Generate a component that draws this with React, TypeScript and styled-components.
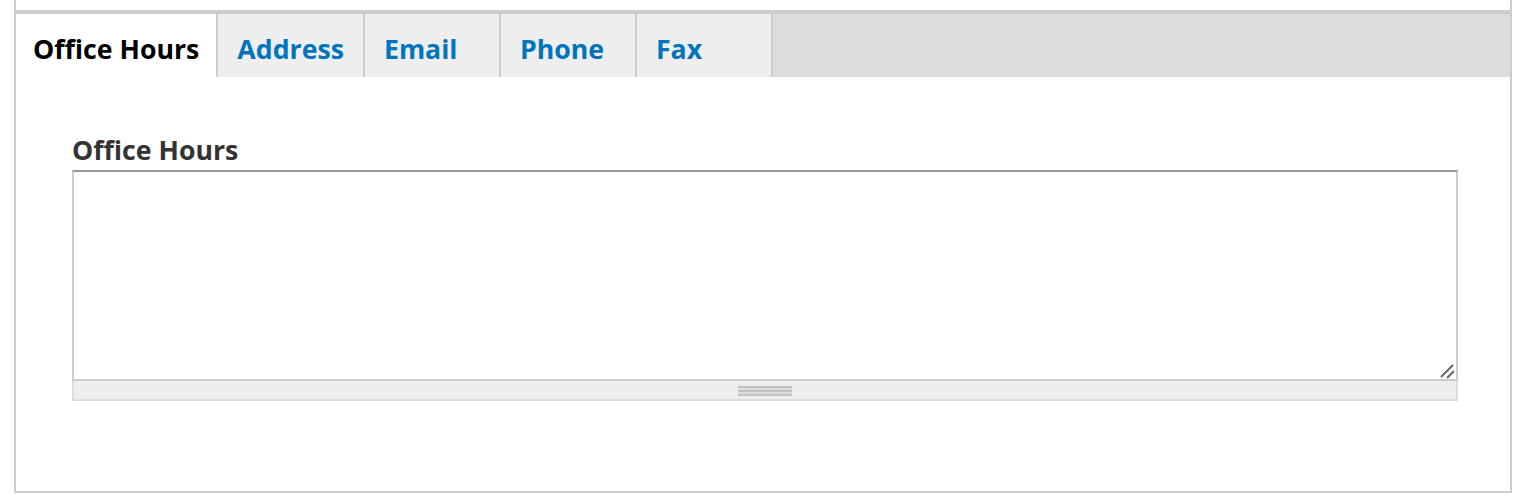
import styled, { createGlobalStyle } from "styled-components";

const GlobalStyle = createGlobalStyle`
  html, body {
    margin: 0;
    background: #fff;
  }
  body {
    font-family: "Open Sans", "Noto Sans", sans-serif;
  }
`;

const Page = styled.div`
  padding: 0 14px;
`;

const Frame = styled.div`
  border: 2px solid #ccc;
  border-top: none;
  padding-top: 10px;
`;

const TabList = styled.ul`
  display: flex;
  margin: 0;
  padding: 0;
  list-style: none;
  background: #ddd;
  border-top: 4px solid #ccc;
`;

const Tab = styled.li<{ active?: boolean }>`
  box-sizing: border-box;
  min-width: 136px;
  height: 63px;
  padding: 6px ${(p) => (p.active ? "17px 0 17px" : "19px 0 19px")};
  line-height: 57px;
  font-size: 26.7px;
  font-weight: 700;
  color: ${(p) => (p.active ? "#000" : "#0074bd")};
  background: ${(p) => (p.active ? "#fff" : "#eee")};
  border-right: 2px solid #ccc;
  white-space: nowrap;
  cursor: pointer;
`;

const Panel = styled.div`
  padding: 56px 52px 90px 56px;
`;

const Label = styled.label`
  display: block;
  margin-bottom: 3px;
  font-size: 26.7px;
  font-weight: 700;
  line-height: 34px;
  color: #333;
`;

const FieldWrap = styled.div`
  position: relative;
`;

const TextArea = styled.textarea`
  display: block;
  box-sizing: border-box;
  width: 100%;
  height: 211px;
  margin: 0;
  padding: 8px;
  border: 2px solid #ccc;
  border-top-color: #999;
  resize: none;
  outline: none;
  font-family: inherit;
  font-size: 24px;
`;

const ResizeMark = styled.svg`
  position: absolute;
  right: 3px;
  top: 193px;
  width: 16px;
  height: 16px;
`;

const Grippie = styled.div`
  display: flex;
  justify-content: center;
  align-items: center;
  box-sizing: border-box;
  height: 20px;
  background: #eee;
  border: 2px solid #ddd;
  border-top: none;
`;

const GripLines = styled.div`
  width: 54px;
  height: 10px;
  margin-top: 2px;
  background: repeating-linear-gradient(
    #c2c2c2 0 2px,
    #dedede 2px 4px
  );
`;

const tabs = ["Office Hours", "Address", "Email", "Phone", "Fax"];

function App() {
  return (
    <Page>
      <GlobalStyle />
      <Frame>
        <TabList>
          {tabs.map((t, i) => (
            <Tab key={t} active={i === 0}>
              {t}
            </Tab>
          ))}
        </TabList>
        <Panel>
          <Label htmlFor="office-hours">Office Hours</Label>
          <FieldWrap>
            <TextArea id="office-hours" />
            <ResizeMark viewBox="0 0 16 16">
              <line x1="2" y1="14" x2="14" y2="2" stroke="#666" strokeWidth="2" />
              <line x1="8" y1="15" x2="15" y2="8" stroke="#666" strokeWidth="2" />
            </ResizeMark>
            <Grippie>
              <GripLines />
            </Grippie>
          </FieldWrap>
        </Panel>
      </Frame>
    </Page>
  );
}

export default App;
